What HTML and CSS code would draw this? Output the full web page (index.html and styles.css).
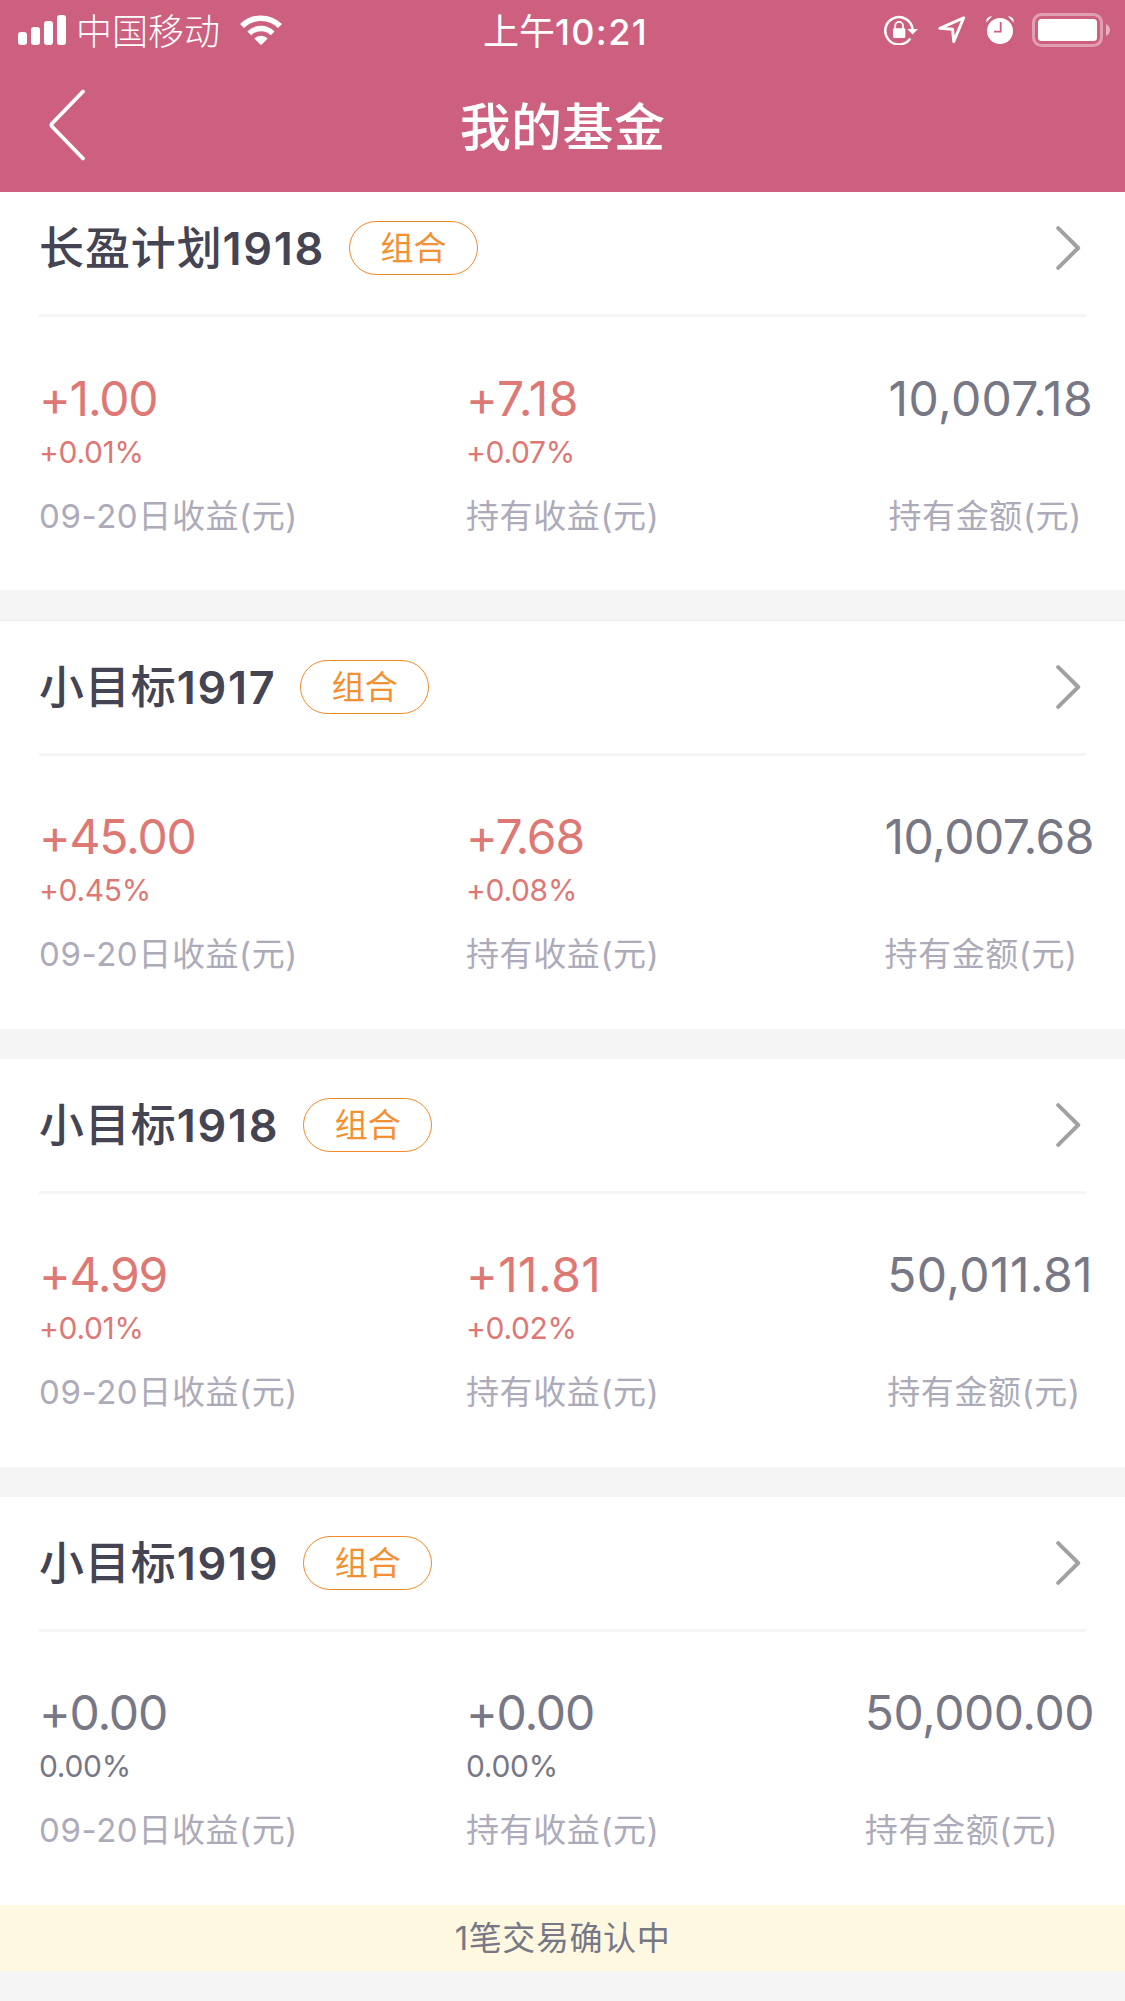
FILE: index.html
```html
<!DOCTYPE html>
<html lang="zh-CN">

    <head>
        <meta charset="utf-8">
        <title>我的基金</title>
        <link rel="stylesheet" href="styles.css">
    </head>

    <body>
        <header class="header">
            <div class="status-bar">
                <div class="status-left">
                    <svg class="signal" width="48" height="30" viewBox="0 0 48 30" fill="#fff">
                        <rect x="0" y="17" width="9" height="13" rx="3" />
                        <rect x="13" y="12" width="9" height="18" rx="3" />
                        <rect x="26" y="6" width="9" height="24" rx="3" />
                        <rect x="39" y="0" width="9" height="30" rx="3" />
                    </svg>
                    <span class="carrier">中国移动</span>
                    <svg class="wifi" width="42" height="30" viewBox="0 0 42 30" fill="none" stroke="#fff">
                        <path d="M2 11A27 27 0 0 1 40 11" stroke-width="5.6" />
                        <path d="M9.3 18.3A16.6 16.6 0 0 1 32.7 18.3" stroke-width="5.4" />
                        <path d="M14.3 23.4A9.5 9.5 0 0 1 27.7 23.4L22 29.3Q21 30.3 20 29.3Z" fill="#fff" stroke="none" />
                    </svg>
                </div>
                <div class="status-time">上午<b>10:21</b></div>
                <div class="status-right">
                    <svg class="lock" width="34" height="30" viewBox="0 0 34 30">
                        <path d="M26.3 23.5A13.7 13.7 0 1 1 28.6 14.5" fill="none" stroke="#fff" stroke-width="2.5" />
                        <path d="M23.3 14H34L28.6 19.6Z" fill="#fff" />
                        <rect x="9" y="13.3" width="12.3" height="9.7" rx="1.3" fill="#fff" />
                        <path d="M11.2 14V11A3.9 4.1 0 0 1 19 11V14" fill="none" stroke="#fff" stroke-width="1.8" />
                    </svg>
                    <svg class="location" width="28" height="28" viewBox="0 0 28 28" fill="none" stroke="#fff" stroke-width="2.9" stroke-linejoin="round">
                        <path d="M25.7 1.8L15.7 25.6L14.6 13.3L1.8 12.3Z" />
                    </svg>
                    <svg class="alarm" width="28" height="28" viewBox="0 0 28 28">
                        <circle cx="14" cy="15" r="13" fill="#fff" />
                        <path d="M.3 6.5Q-.4 .6 6.2 .3ZM27.7 6.5Q28.4 .6 21.8 .3Z" fill="#fff" />
                        <path d="M14.7 6V15.6H8" fill="none" stroke="#ce607f" stroke-width="1.8" />
                    </svg>
                    <svg class="battery" width="78" height="34" viewBox="0 0 78 34">
                        <rect x="1.5" y="1.5" width="68" height="31" rx="8" fill="none" stroke="#fff" stroke-opacity=".4" stroke-width="3" />
                        <rect x="6" y="6" width="59" height="22" rx="3.5" fill="#fff" />
                        <path d="M74 11Q78 13 78 17T74 23Z" fill="#fff" fill-opacity=".5" />
                    </svg>
                </div>
            </div>
            <div class="nav-bar">
                <svg class="back" width="36" height="72" viewBox="0 0 36 72" fill="none" stroke="#fff" stroke-width="3.8" stroke-linecap="round" stroke-linejoin="round">
                    <path d="M34 2.5L2.8 34.8Q2 36 2.8 37.2L34 69.5" />
                </svg>
                <h1>我的基金</h1>
            </div>
        </header>

        <main class="fund-list">
            <section class="card">
                <div class="card-head">
                    <h2>长盈计划<b>1918</b></h2>
                    <span class="tag">组合</span>
                    <svg class="arrow" width="25" height="44" viewBox="0 0 25 44">
                        <path d="M2.2 2.2L22.2 22L2.2 41.8" />
                    </svg>
                </div>
                <div class="card-body">
                    <div class="cell up">
                        <div class="value">+1.00</div>
                        <div class="rate">+0.01%</div>
                        <div class="label">09-20日收益(元)</div>
                    </div>
                    <div class="cell up">
                        <div class="value loose">+7.18</div>
                        <div class="rate">+0.07%</div>
                        <div class="label">持有收益(元)</div>
                    </div>
                    <div class="cell total">
                        <div class="value loose">10,007.18</div>
                        <div class="rate"></div>
                        <div class="label">持有金额(元)</div>
                    </div>
                </div>
            </section>

            <section class="card">
                <div class="card-head">
                    <h2>小目标<b>1917</b></h2>
                    <span class="tag">组合</span>
                    <svg class="arrow" width="25" height="44" viewBox="0 0 25 44">
                        <path d="M2.2 2.2L22.2 22L2.2 41.8" />
                    </svg>
                </div>
                <div class="card-body">
                    <div class="cell up">
                        <div class="value">+45.00</div>
                        <div class="rate">+0.45%</div>
                        <div class="label">09-20日收益(元)</div>
                    </div>
                    <div class="cell up">
                        <div class="value">+7.68</div>
                        <div class="rate">+0.08%</div>
                        <div class="label">持有收益(元)</div>
                    </div>
                    <div class="cell total">
                        <div class="value">10,007.68</div>
                        <div class="rate"></div>
                        <div class="label">持有金额(元)</div>
                    </div>
                </div>
            </section>

            <section class="card">
                <div class="card-head">
                    <h2>小目标<b>1918</b></h2>
                    <span class="tag">组合</span>
                    <svg class="arrow" width="25" height="44" viewBox="0 0 25 44">
                        <path d="M2.2 2.2L22.2 22L2.2 41.8" />
                    </svg>
                </div>
                <div class="card-body">
                    <div class="cell up">
                        <div class="value">+4.99</div>
                        <div class="rate">+0.01%</div>
                        <div class="label">09-20日收益(元)</div>
                    </div>
                    <div class="cell up">
                        <div class="value loose">+11.81</div>
                        <div class="rate">+0.02%</div>
                        <div class="label">持有收益(元)</div>
                    </div>
                    <div class="cell total">
                        <div class="value loose">50,011.81</div>
                        <div class="rate"></div>
                        <div class="label">持有金额(元)</div>
                    </div>
                </div>
            </section>

            <section class="card">
                <div class="card-head">
                    <h2>小目标<b>1919</b></h2>
                    <span class="tag">组合</span>
                    <svg class="arrow" width="25" height="44" viewBox="0 0 25 44">
                        <path d="M2.2 2.2L22.2 22L2.2 41.8" />
                    </svg>
                </div>
                <div class="card-body">
                    <div class="cell">
                        <div class="value">+0.00</div>
                        <div class="rate">0.00%</div>
                        <div class="label">09-20日收益(元)</div>
                    </div>
                    <div class="cell">
                        <div class="value">+0.00</div>
                        <div class="rate">0.00%</div>
                        <div class="label">持有收益(元)</div>
                    </div>
                    <div class="cell total">
                        <div class="value">50,000.00</div>
                        <div class="rate"></div>
                        <div class="label">持有金额(元)</div>
                    </div>
                </div>
                <div class="notice">1笔交易确认中</div>
            </section>
        </main>
    </body>

</html>
```
FILE: styles.css
```css
* {
    box-sizing: border-box;
}

body {
    margin: 0;
    background: #f5f5f5;
    color: #777786;
    font-family: Inter, "Noto Sans CJK SC", sans-serif;
    font-feature-settings: "calt" 0;
}

h1,
h2 {
    margin: 0;
    font-weight: 500;
}

svg {
    display: block;
    flex: none;
}

.header {
    position: relative;
    z-index: 1;
    height: 192px;
    background: #ce607f;
    color: #fff;
}

.status-bar {
    display: grid;
    grid-template-columns: 1fr auto 1fr;
    align-items: center;
    height: 60px;
    padding: 0 15px 0 18px;
    font-size: 36px;
    line-height: 56px;
}

.status-left,
.status-right {
    display: flex;
    align-items: center;
}

.status-right {
    justify-content: flex-end;
}

.carrier {
    margin: 0 20px 0 10px;
    padding-top: 4px;
    font-weight: 300;
}

.status-time {
    padding: 4px 0 0 3px;
}

.status-time b {
    font-weight: 500;
    letter-spacing: 1.4px;
}

.location {
    margin-left: 20px;
}

.alarm {
    margin-left: 20px;
}

.battery {
    margin-left: 18px;
}

.nav-bar {
    display: grid;
    grid-template-columns: 100px 1fr 100px;
    align-items: center;
    height: 130px;
}

.back {
    margin-left: 49px;
}

.nav-bar h1 {
    padding-top: 5px;
    font-size: 51px;
    letter-spacing: 0.4px;
    line-height: 70px;
    text-align: center;
}

/* the first card is scrolled slightly under the header */
.fund-list {
    display: flex;
    flex-direction: column;
    gap: 30px;
    margin-top: -10px;
}

.card {
    background: #fff;
}

.card:first-child {
    margin-bottom: 1px;
}

.card:nth-child(2) {
    box-shadow: 0 -1px #ebebeb;
}

.card-head {
    display: flex;
    align-items: center;
    height: 135px;
    margin: 0 39px;
    border-bottom: 3px solid #f5f5f5;
}

.card-head h2 {
    padding-top: 2px;
    color: #444453;
    font-size: 45px;
    letter-spacing: 0.9px;
    line-height: 60px;
}

.card-head b {
    font-weight: 600;
    letter-spacing: 1.7px;
}

.tag {
    width: 129px;
    height: 54px;
    margin-left: 24px;
    border: 1px solid #f28a26;
    border-radius: 27px;
    color: #f39032;
    font-size: 33px;
    line-height: 52px;
    text-align: center;
}

.arrow {
    margin-left: auto;
    margin-right: 5px;
    fill: none;
    stroke: #a1a1a1;
    stroke-width: 4;
    stroke-linecap: round;
    stroke-linejoin: round;
}

.card-body {
    display: grid;
    grid-template-columns: 427px 1fr auto;
    height: 273px;
    padding: 51px 31px 0 39px;
}

.card:first-child .card-body {
    padding-top: 52px;
}

.value {
    font-size: 48px;
    letter-spacing: -1.2px;
    line-height: 60px;
}

.total .value {
    letter-spacing: -0.5px;
}

.cell .loose {
    letter-spacing: 0.4px;
}

.total .loose {
    padding-right: 1px;
}

.rate {
    height: 36px;
    margin-top: 5px;
    font-size: 30px;
    letter-spacing: -0.3px;
    line-height: 36px;
}

.up .value,
.up .rate {
    color: #dd7874;
}

.label {
    margin-top: 23px;
    color: #adabba;
    font-size: 33px;
    letter-spacing: 0.6px;
    line-height: 46px;
}

.notice {
    height: 66px;
    background: #fef8e1;
    font-size: 33px;
    letter-spacing: 0.6px;
    line-height: 66px;
    text-align: center;
}
```
